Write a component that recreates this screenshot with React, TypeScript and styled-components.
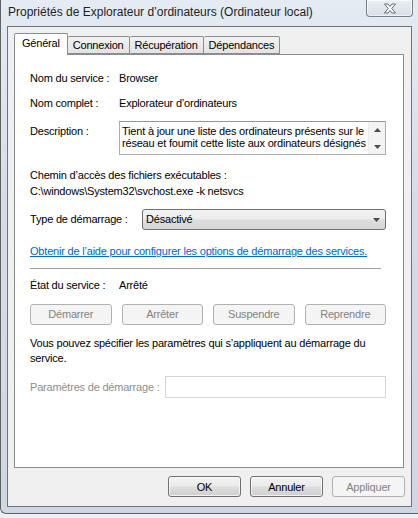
import styled, { createGlobalStyle } from "styled-components";

const GlobalStyle = createGlobalStyle`
  html, body {
    margin: 0;
    padding: 0;
    background: #eef1f4;
  }
  body {
    width: 418px;
    height: 518px;
    overflow: hidden;
  }
`;

const Frame = styled.div`
  box-sizing: border-box;
  width: 418px;
  height: 514px;
  border: 1px solid #5d6168;
  border-top: none;
  border-right: none;
  border-radius: 0 0 0 6px;
  background: linear-gradient(to bottom, #e4ebf2 0%, #d4dde7 40%, #cfd8e2 100%);
  display: flex;
  flex-direction: column;
  font-family: "Liberation Sans", Arial, sans-serif;
  letter-spacing: -0.2px;
`;

const TitleBar = styled.div`
  height: 26px;
  display: flex;
  align-items: flex-start;
  justify-content: space-between;
`;

const Title = styled.span`
  font-family: "Segoe UI", "Liberation Sans", Arial, sans-serif;
  font-size: 12px;
  letter-spacing: 0;
  color: #1e1e1e;
  padding: 5px 0 0 7px;
  white-space: nowrap;
`;

const CloseButton = styled.div`
  box-sizing: border-box;
  width: 47px;
  height: 17px;
  margin-right: 5px;
  border: 1px solid #7b8087;
  border-top: none;
  border-radius: 0 0 4px 4px;
  background: linear-gradient(to bottom, #e9eef3, #d8dfe6);
  box-shadow: inset 0 0 0 1px rgba(255, 255, 255, 0.6);
  display: flex;
  align-items: center;
  justify-content: center;
`;

const Dialog = styled.div`
  box-sizing: border-box;
  margin: 0 6px 0 6px;
  height: 481px;
  border: 1px solid #6f747a;
  background: #f0f0f0;
  padding: 6px 7px 0 6px;
  display: flex;
  flex-direction: column;
`;

const TabStrip = styled.div`
  display: flex;
  align-items: flex-end;
  height: 21px;
  position: relative;
  z-index: 1;
`;

const Tab = styled.div<{ $active?: boolean }>`
  box-sizing: border-box;
  height: ${(p) => (p.$active ? "22px" : "18px")};
  margin-bottom: ${(p) => (p.$active ? "-1px" : "0")};
  padding: ${(p) => (p.$active ? "3px 7px 0 7px" : "2px 5px 0 5px")};
  border: 1px solid #898c95;
  border-bottom: ${(p) => (p.$active ? "none" : "1px solid #898c95")};
  border-left: ${(p) => (p.$active ? "1px solid #898c95" : "none")};
  border-radius: 2px 2px 0 0;
  background: ${(p) =>
    p.$active ? "#ffffff" : "linear-gradient(to bottom, #f2f2f2, #e3e3e3)"};
  font-size: 11px;
  line-height: 13px;
  color: #000;
  white-space: nowrap;
`;

const Panel = styled.div`
  box-sizing: border-box;
  height: 414px;
  border: 1px solid #898c95;
  background: #ffffff;
  padding: 17px 17px 0 15px;
  font-size: 11px;
  line-height: 13px;
  color: #000;
`;

const InfoRow = styled.div<{ $gap?: number; $top?: number }>`
  display: grid;
  grid-template-columns: 89px 1fr;
  align-items: start;
  margin-top: ${(p) => p.$top ?? 0}px;
  margin-bottom: ${(p) => p.$gap ?? 0}px;
`;

const Label = styled.span`
  white-space: nowrap;
`;

const DescBox = styled.div`
  box-sizing: border-box;
  height: 34px;
  border: 1px solid #abadb3;
  border-top-color: #8f959c;
  display: flex;
  margin-top: -4px;
`;

const DescText = styled.div`
  flex: 1;
  padding: 3px 0 0 2px;
  line-height: 12px;
  white-space: nowrap;
  overflow: hidden;
`;

const ScrollBar = styled.div`
  width: 16px;
  background: #f3f3f3;
  border-left: 1px solid #ececec;
  display: flex;
  flex-direction: column;
  justify-content: space-between;
  align-items: center;
  padding: 6px 0 5px;
`;

const Block = styled.div<{ $top?: number }>`
  margin-top: ${(p) => p.$top ?? 0}px;
`;

const PathLine = styled.div`
  margin-top: 3px;
`;

const StartupRow = styled.div`
  display: flex;
  align-items: center;
  margin-top: 11px;
`;

const StartupLabel = styled.span`
  width: 112px;
  flex-shrink: 0;
`;

const Combo = styled.div`
  box-sizing: border-box;
  flex: 1;
  height: 21px;
  border: 1px solid #707070;
  border-radius: 3px;
  background: linear-gradient(to bottom, #f3f3f3 0%, #ececec 45%, #dddddd 55%, #d6d6d6 100%);
  display: flex;
  align-items: center;
  justify-content: space-between;
  padding: 0 5px 0 3px;
`;

const Link = styled.a`
  display: block;
  margin-top: 15px;
  color: #0066cc;
  text-decoration: underline;
  white-space: nowrap;
`;

const Separator = styled.hr`
  border: none;
  border-top: 1px solid #a0a0a0;
  margin: 10px 5px 0 0;
  height: 0;
`;

const ControlButtons = styled.div`
  display: grid;
  grid-template-columns: repeat(4, 1fr);
  gap: 10px;
  margin-top: 12px;
`;

const Button = styled.div<{ $disabled?: boolean }>`
  box-sizing: border-box;
  height: 21px;
  border: 1px solid ${(p) => (p.$disabled ? "#adb2b5" : "#707070")};
  border-radius: 3px;
  background: ${(p) =>
    p.$disabled
      ? "#f4f4f4"
      : "linear-gradient(to bottom, #f2f2f2 0%, #ebebeb 45%, #dddddd 55%, #cfcfcf 100%)"};
  box-shadow: ${(p) => (p.$disabled ? "none" : "inset 0 0 0 1px rgba(255,255,255,0.7)")};
  color: ${(p) => (p.$disabled ? "#838383" : "#000")};
  font-size: 11px;
  display: flex;
  align-items: center;
  justify-content: center;
`;

const Paragraph = styled.p`
  margin: 11px 0 0 0;
  line-height: 15px;
`;

const ParamRow = styled.div`
  display: flex;
  align-items: center;
  margin-top: 10px;
`;

const ParamLabel = styled.span`
  width: 135px;
  flex-shrink: 0;
  color: #8d8d8d;
`;

const ParamInput = styled.div`
  box-sizing: border-box;
  flex: 1;
  height: 22px;
  border: 1px solid #d5d5d5;
  background: #fff;
`;

const Footer = styled.div`
  display: grid;
  grid-template-columns: repeat(3, 73px);
  gap: 9px;
  justify-content: end;
  margin-top: 8px;
  margin-right: -1px;
`;

function Arrow({ up }: { up?: boolean }) {
  return (
    <svg width="7" height="4" viewBox="0 0 7 4">
      <path d={up ? "M3.5 0 L7 4 L0 4 Z" : "M0 0 L7 0 L3.5 4 Z"} fill="#4a4a4a" />
    </svg>
  );
}

function CloseGlyph() {
  return (
    <svg width="14" height="11" viewBox="0 0 14 11">
      <path
        d="M1.5 1 L5 1 L7 3.5 L9 1 L12.5 1 L8.8 5.5 L12.5 10 L9 10 L7 7.5 L5 10 L1.5 10 L5.2 5.5 Z"
        fill="#ffffff"
        stroke="#5f6b78"
        strokeWidth="1"
        strokeLinejoin="round"
      />
    </svg>
  );
}

export default function App() {
  return (
    <>
      <GlobalStyle />
      <Frame>
        <TitleBar>
          <Title>Propriétés de Explorateur d’ordinateurs (Ordinateur local)</Title>
          <CloseButton>
            <CloseGlyph />
          </CloseButton>
        </TitleBar>
        <Dialog>
          <TabStrip>
            <Tab $active>Général</Tab>
            <Tab>Connexion</Tab>
            <Tab>Récupération</Tab>
            <Tab>Dépendances</Tab>
          </TabStrip>
          <Panel>
            <InfoRow $gap={12}>
              <Label>Nom du service :</Label>
              <span>Browser</span>
            </InfoRow>
            <InfoRow $gap={15}>
              <Label>Nom complet :</Label>
              <span>Explorateur d’ordinateurs</span>
            </InfoRow>
            <InfoRow>
              <Label>Description :</Label>
              <DescBox>
                <DescText>
                  Tient à jour une liste des ordinateurs présents sur le
                  <br />
                  réseau et foumit cette liste aux ordinateurs désignés
                </DescText>
                <ScrollBar>
                  <Arrow up />
                  <Arrow />
                </ScrollBar>
              </DescBox>
            </InfoRow>
            <Block $top={14}>
              Chemin d’accès des fichiers exécutables :
              <PathLine>C:\windows\System32\svchost.exe -k netsvcs</PathLine>
            </Block>
            <StartupRow>
              <StartupLabel>Type de démarrage :</StartupLabel>
              <Combo>
                <span>Désactivé</span>
                <Arrow />
              </Combo>
            </StartupRow>
            <Link>Obtenir de l’aide pour configurer les options de démarrage des services.</Link>
            <Separator />
            <InfoRow $top={10}>
              <Label>État du service :</Label>
              <span>Arrêté</span>
            </InfoRow>
            <ControlButtons>
              <Button $disabled>Démarrer</Button>
              <Button $disabled>Arrêter</Button>
              <Button $disabled>Suspendre</Button>
              <Button $disabled>Reprendre</Button>
            </ControlButtons>
            <Paragraph>
              Vous pouvez spécifier les paramètres qui s’appliquent au démarrage du
              <br />
              service.
            </Paragraph>
            <ParamRow>
              <ParamLabel>Paramètres de démarrage :</ParamLabel>
              <ParamInput />
            </ParamRow>
          </Panel>
          <Footer>
            <Button>OK</Button>
            <Button>Annuler</Button>
            <Button $disabled>Appliquer</Button>
          </Footer>
        </Dialog>
      </Frame>
    </>
  );
}
